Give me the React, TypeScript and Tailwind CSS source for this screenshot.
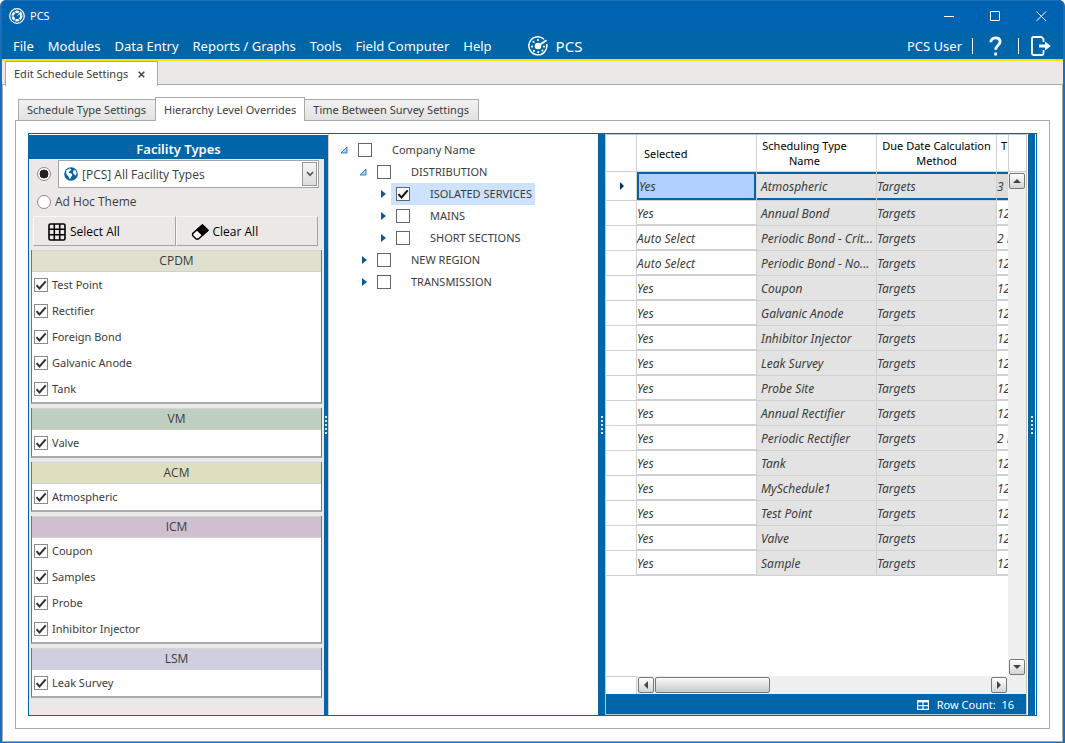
import { useState } from "react";
import type { ReactNode } from "react";

type Group = { name: string; color: string; items: string[] };

const groups: Group[] = [
  {
    name: "CPDM",
    color: "bg-[#dfe0cd]",
    items: ["Test Point", "Rectifier", "Foreign Bond", "Galvanic Anode", "Tank"],
  },
  { name: "VM", color: "bg-[#bfcfbf]", items: ["Valve"] },
  { name: "ACM", color: "bg-[#dfdfbf]", items: ["Atmospheric"] },
  { name: "ICM", color: "bg-[#d0bfcf]", items: ["Coupon", "Samples", "Probe", "Inhibitor Injector"] },
  { name: "LSM", color: "bg-[#cfcfdf]", items: ["Leak Survey"] },
];

type Node = { label: string; indent: string; open?: boolean; selected?: boolean };

const tree: Node[] = [
  { label: "Company Name", indent: "pl-[9px]", open: true },
  { label: "DISTRIBUTION", indent: "pl-[28px]", open: true },
  { label: "ISOLATED SERVICES", indent: "pl-[47px]", selected: true },
  { label: "MAINS", indent: "pl-[47px]" },
  { label: "SHORT SECTIONS", indent: "pl-[47px]" },
  { label: "NEW REGION", indent: "pl-[28px]" },
  { label: "TRANSMISSION", indent: "pl-[28px]" },
];

const rows = [
  ["Yes", "Atmospheric", "3 Y"],
  ["Yes", "Annual Bond", "12"],
  ["Auto Select", "Periodic Bond - Crit...", "2 M"],
  ["Auto Select", "Periodic Bond - No...", "12"],
  ["Yes", "Coupon", "12"],
  ["Yes", "Galvanic Anode", "12"],
  ["Yes", "Inhibitor Injector", "12"],
  ["Yes", "Leak Survey", "12"],
  ["Yes", "Probe Site", "12"],
  ["Yes", "Annual Rectifier", "12"],
  ["Yes", "Periodic Rectifier", "2 M"],
  ["Yes", "Tank", "12"],
  ["Yes", "MySchedule1", "12"],
  ["Yes", "Test Point", "12"],
  ["Yes", "Valve", "12"],
  ["Yes", "Sample", "12"],
];

const menu = ["File", "Modules", "Data Entry", "Reports / Graphs", "Tools", "Field Computer", "Help"];
const tabs = ["Schedule Type Settings", "Hierarchy Level Overrides", "Time Between Survey Settings"];

function AppIcon() {
  return (
    <svg viewBox="0 0 16 16" className="size-4" fill="none" stroke="white">
      <circle cx="8" cy="8" r="7.3" strokeWidth="1.2" />
      <circle cx="8" cy="8" r="4.3" strokeWidth="2.4" strokeDasharray="3.7 .8" />
      <path d="M8.5 7.5l4-3.5" strokeWidth="1" />
    </svg>
  );
}

function Logo() {
  return (
    <svg viewBox="0 0 20 20" className="size-5" fill="none" stroke="white">
      <path d="M16 3.2A9 9 0 1 0 18.7 8" strokeWidth="1.5" />
      <path d="M10 10l8.5-5.8" strokeWidth="1.8" />
      <g fill="white" stroke="none">
        <circle cx="10" cy="10" r="3.3" />
        <circle cx="10" cy="4" r="1.1" />
        <circle cx="5.6" cy="5.8" r="1.1" />
        <circle cx="4" cy="10.6" r="1.1" />
        <circle cx="6" cy="14.8" r="1.1" />
        <circle cx="10.3" cy="16.2" r="1.1" />
        <circle cx="14.4" cy="14.6" r="1.1" />
        <circle cx="16" cy="10.6" r="1.1" />
      </g>
    </svg>
  );
}

function Check({ label, checked = false, dark = false }: { label: string; checked?: boolean; dark?: boolean }) {
  const [on, setOn] = useState(checked);
  return (
    <span className="relative flex size-3.5 shrink-0">
      <input
        type="checkbox"
        aria-label={label}
        checked={on}
        onChange={() => setOn(!on)}
        className={`peer size-3.5 appearance-none border bg-white ${dark ? "border-[#666]" : "border-[#8a8a8a]"}`}
      />
      <svg
        viewBox="0 0 14 14"
        className="pointer-events-none absolute inset-0 hidden size-3.5 peer-checked:block"
        fill="none"
        stroke={dark ? "#111" : "#333"}
        strokeWidth="2"
      >
        <path d="M2.5 7.2l3 3.3L11.7 3.4" />
      </svg>
    </span>
  );
}

function ScrollButton({ label, path }: { label: string; path: string }) {
  return (
    <button
      type="button"
      aria-label={label}
      className="flex size-4 shrink-0 items-center justify-center rounded-xs border border-[#777] bg-linear-to-b from-white to-[#d4d4d4]"
    >
      <svg viewBox="0 0 8 8" className="size-2" fill="#444">
        <path d={path} />
      </svg>
    </button>
  );
}

function Splitter({ className }: { className: string }) {
  return (
    <div className={`flex shrink-0 items-center justify-center bg-[#0065a9] ${className}`}>
      <span className="flex flex-col gap-0.5">
        {[0, 1, 2, 3, 4].map((i) => (
          <span key={i} className="h-0.5 w-0.5 bg-[#dce9f4]" />
        ))}
      </span>
    </div>
  );
}

function ToolButton({ icon, children }: { icon: ReactNode; children: ReactNode }) {
  return (
    <button
      type="button"
      className="flex h-[30px] flex-1 items-center gap-1 border border-t-[#f8f6f6] border-r-[#a5a3a3] border-b-[#a5a3a3] border-l-[#f8f6f6] pt-px pl-3.5 font-['Open_Sans',sans-serif] text-[12px] text-black"
    >
      {icon}
      {children}
    </button>
  );
}

function FacilityPanel() {
  return (
    <section className="mt-px flex w-[299px] shrink-0 flex-col">
      <h2 className="flex h-6 items-center justify-center bg-[#0065a9] pt-1 text-[13px] font-semibold text-white">
        Facility Types
      </h2>
      <div className="flex flex-1">
        <div className="flex-1 bg-[#ece8e8] pb-4">
          <div className="flex h-[29px] items-center pt-px pr-[5px] pl-2">
            <input
              type="radio"
              name="theme"
              aria-label="Facility type theme"
              defaultChecked
              className="mr-[7px] size-3.5 appearance-none rounded-full border border-[#888] bg-white bg-radial checked:from-[#222] checked:from-50% checked:to-white checked:to-55%"
            />
            <div className="relative h-7 flex-1">
              <select
                aria-label="Facility types"
                className="h-7 w-full appearance-none border border-[#a5a5a5] bg-white pt-px pl-[23px] font-['Open_Sans',sans-serif] text-[12px]"
              >
                <option>[PCS] All Facility Types</option>
              </select>
              <svg viewBox="0 0 14 14" className="pointer-events-none absolute top-[7px] left-1.5 size-3.5">
                <circle cx="7" cy="7" r="6.8" fill="#0f62a0" />
                <path d="M2.2 3.4L5.6 1.6l1.8.7-.8 1.5-1.8.9.3 1.2 2.4.7.9 1.4-1.5 2.4L6 12.6 4.6 9.7 2.3 7z" fill="white" />
                <path d="M9.6 3l2 .4 1 2.6-.8 2.4-1.6-.8-1.2-1.9z" fill="white" />
              </svg>
              <span className="pointer-events-none absolute top-0.5 right-0.5 flex h-6 w-[15px] items-center justify-center border border-[#999] bg-linear-to-b from-[#f4f4f4] to-[#ddd]">
                <svg viewBox="0 0 8 6" className="h-1.5 w-2" fill="none" stroke="#555" strokeWidth="1.6">
                  <path d="M1 1l3 3.4L7 1" />
                </svg>
              </span>
            </div>
          </div>
          <label className="flex h-7 items-center gap-1 pl-2 font-['Open_Sans',sans-serif] text-[12px]">
            <input
              type="radio"
              name="theme"
              className="size-3.5 appearance-none rounded-full border border-[#888] bg-white bg-radial checked:from-[#222] checked:from-50% checked:to-white checked:to-55%"
            />
            Ad Hoc Theme
          </label>
          <div className="flex pr-1.5 pl-1">
            <ToolButton
              icon={
                <svg viewBox="0 0 18 18" className="size-[18px]" fill="none" stroke="black" strokeWidth="1.6">
                  <rect x="1" y="1" width="16" height="16" rx="1.5" />
                  <path d="M6.3 1v16M11.7 1v16M1 6.3h16M1 11.7h16" />
                </svg>
              }
            >
              Select All
            </ToolButton>
            <ToolButton
              icon={
                <svg viewBox="0 0 18 18" className="size-[18px]" stroke="black" strokeWidth="1.4" strokeLinejoin="round">
                  <path d="M11.4 2L17 7.2 7.4 16H5.2L1.6 12.4v-1.8z" fill="white" />
                  <path d="M11.4 2L17 7.2l-5.4 5L6 6.8z" fill="black" />
                </svg>
              }
            >
              Clear All
            </ToolButton>
          </div>
          <div className="flex flex-col gap-1 pt-1 pr-0.5 pl-0.5">
            {groups.map((g) => (
              <fieldset key={g.name} className="min-w-0 border-x border-b-2 border-x-[#777] border-b-[#aaa] bg-white">
                <div
                  className={`flex h-[22px] items-center justify-center border-y border-t-[#d4d4d0] border-b-[#d0d0d0] font-['Open_Sans',sans-serif] text-[12px] ${g.color}`}
                >
                  {g.name}
                </div>
                {g.items.map((item) => (
                  <label key={item} className="flex h-[26px] items-center gap-1 pl-0.5">
                    <Check label={item} checked />
                    {item}
                  </label>
                ))}
              </fieldset>
            ))}
          </div>
        </div>
        <Splitter className="w-1 pb-6" />
      </div>
    </section>
  );
}

function TreePanel() {
  return (
    <section className="w-[270px] shrink-0 border-l border-[#ccc] bg-white pt-[5px]">
      <ul>
        {tree.map((n) => (
          <li key={n.label} className={`-ml-px flex h-[22px] items-center ${n.indent}`}>
            <button type="button" aria-label={`Toggle ${n.label}`} className="flex w-4 pl-[3px]">
              <svg viewBox="0 0 8 8" className="size-2">
                {n.open ? (
                  <path d="M7 1v6H1z" fill="#a8d4f0" stroke="#1b6aa8" strokeWidth=".8" />
                ) : (
                  <path d="M3 0l5 4-5 4z" fill="#0d5a98" />
                )}
              </svg>
            </button>
            <label className={`flex h-full items-center gap-5 pr-[3px] pl-[5px] ${n.selected ? "bg-[#cce2ff]" : ""}`}>
              <Check label={n.label} checked={n.selected} dark />
              {n.label}
            </label>
          </li>
        ))}
      </ul>
    </section>
  );
}

function Grid() {
  const head = "h-[37px] border-r border-b border-[#d0d0d0] p-0 text-center font-normal leading-[15px] text-black";
  const cell = "border-r border-b border-[#d0d0d0] p-0 whitespace-nowrap";
  return (
    <section className="flex min-w-0 flex-1 flex-col border-t border-r border-b border-[#c8c8c8] bg-white">
      <div className="flex flex-1">
        <div className="w-0 flex-1 overflow-hidden">
          <table className="w-[511px] table-fixed border-separate border-spacing-0">
            <thead>
              <tr>
                <th className={`w-[31px] ${head}`} />
                <th className={`w-[120px] ${head}`}>
                  <div className="pl-[7px] text-left">Selected</div>
                </th>
                <th className={`w-[120px] ${head}`}>
                  <div className="pr-6">
                    Scheduling Type
                    <br />
                    Name
                  </div>
                </th>
                <th className={`w-[120px] ${head}`}>
                  Due Date Calculation
                  <br />
                  Method
                </th>
                <th className={`w-[120px] ${head}`}>
                  <div className="pb-[15px] pl-1 text-left">T</div>
                </th>
              </tr>
            </thead>
            <tbody className="text-[12px] italic">
              {rows.map(([selected, name, period], i) =>
                i === 0 ? (
                  <tr key={name} className="h-[29px]">
                    <td className={cell}>
                      <svg viewBox="0 0 8 8" className="ml-[11px] size-2" fill="#0b2e63">
                        <path d="M3 0l4 4-4 4z" />
                      </svg>
                    </td>
                    <td className={cell}>
                      <div className="flex h-7 items-center border-2 border-[#0065a9] bg-[#b0d1ff] pt-0.5">{selected}</div>
                    </td>
                    <td className={cell}>
                      <div className="flex h-7 items-center border-y-2 border-[#0065a9] bg-[#e3e3e3] pt-0.5 pl-1">{name}</div>
                    </td>
                    <td className={cell}>
                      <div className="flex h-7 items-center border-y-2 border-[#0065a9] bg-[#e3e3e3] pt-0.5">Targets</div>
                    </td>
                    <td className={cell}>
                      <div className="flex h-7 items-center border-y-2 border-[#0065a9] bg-[#dcdcdc] pt-0.5">{period}</div>
                    </td>
                  </tr>
                ) : (
                  <tr key={name} className="h-[25px]">
                    <td className={cell} />
                    <td className={cell}>
                      <div className="flex h-6 items-center border-b border-[#d0d0d0] pt-0.5">{selected}</div>
                    </td>
                    <td className={`bg-[#e3e3e3] ${cell}`}>
                      <div className="pt-px pl-1">{name}</div>
                    </td>
                    <td className={`bg-[#e3e3e3] ${cell}`}>
                      <div className="pt-px">Targets</div>
                    </td>
                    <td className={cell}>
                      <div className="flex h-6 items-center border-b border-[#d0d0d0] pt-0.5">{period}</div>
                    </td>
                  </tr>
                ),
              )}
            </tbody>
          </table>
        </div>
        <div className="flex w-[18px] shrink-0 flex-col">
          <div className="h-[37px] border-b border-l border-[#d0d0d0]" />
          <div className="flex flex-1 flex-col items-center justify-between bg-[#efefef] py-px">
            <ScrollButton label="Scroll up" path="M0 6l4-4 4 4z" />
            <ScrollButton label="Scroll down" path="M0 2l4 4 4-4z" />
          </div>
        </div>
      </div>
      <div className="flex h-[18px]">
        <div className="w-[31px] border-t border-r border-[#d0d0d0]" />
        <div className="flex flex-1 items-center gap-px bg-[#efefef] px-px">
          <ScrollButton label="Scroll left" path="M6 0L2 4l4 4z" />
          <div className="h-4 w-[115px] rounded-xs border border-[#777] bg-linear-to-b from-[#fafafa] to-[#c9c9c9]" />
          <span className="flex-1" />
          <ScrollButton label="Scroll right" path="M2 0l4 4-4 4z" />
        </div>
        <div className="w-[18px] bg-[#efefef]" />
      </div>
      <footer className="flex h-5 items-center justify-end gap-2 bg-[#0065a9] pt-px pr-3 whitespace-pre text-white">
        <svg viewBox="0 0 12 10" className="h-2.5 w-3" fill="none" stroke="white">
          <path d="M.6 1h10.8v8.4H.6zM6 1v8.4M.6 5.6h10.8" strokeWidth="1.2" />
          <path d="M0 1.2h12" strokeWidth="2.4" />
        </svg>
        Row Count:  16
      </footer>
    </section>
  );
}

export default function App() {
  const [tab, setTab] = useState(tabs[1]);

  return (
    <div className="flex min-h-screen flex-col overflow-hidden rounded-t-md border-x-2 border-b border-[#1a6fb8] bg-[#0063b1] font-['Noto_Sans',sans-serif] text-[11px] leading-4 text-[#3c3c3c]">
      <header>
        <div className="flex h-[31px] items-center border-t border-[#1a6fb8] bg-[#0063b1] pr-4 pl-[7px] text-white">
          <AppIcon />
          <span className="ml-[5px] flex-1">PCS</span>
          <div className="flex items-center gap-[35px]">
            <button type="button" aria-label="Minimize">
              <svg viewBox="0 0 11 11" className="size-[11px]" stroke="white">
                <path d="M0 5.5h10" />
              </svg>
            </button>
            <button type="button" aria-label="Maximize">
              <svg viewBox="0 0 11 11" className="size-[11px]" fill="none" stroke="white">
                <path d="M.5.5h9v9h-9z" />
              </svg>
            </button>
            <button type="button" aria-label="Close">
              <svg viewBox="0 0 11 11" className="size-[11px]" stroke="white">
                <path d="M.5.5l9.500 9.500M10 .5L.5 10" />
              </svg>
            </button>
          </div>
        </div>
        <div className="flex h-[30px] items-center border-b-2 border-[#fee000] bg-[#0065a9] pt-px pr-3 pl-[11px] text-[13px] text-white">
          <nav className="flex gap-3.5">
            {menu.map((item) => (
              <button key={item} type="button" className="whitespace-nowrap">
                {item}
              </button>
            ))}
          </nav>
          <div className="ml-9 flex flex-1 items-center gap-2 text-[15px]">
            <Logo />
            PCS
          </div>
          <span className="mr-2.5">PCS User</span>
          <span className="h-4 w-px bg-white" />
          <button type="button" aria-label="Help" className="mx-4">
            <svg viewBox="0 0 13 20" className="h-5 w-[13px]" fill="none" stroke="white" strokeWidth="2.8">
              <path d="M1.8 6.2C1.8 3.4 3.8 1.8 6.5 1.8s4.6 1.5 4.6 4c0 3.4-4.5 3.6-4.5 8" />
              <path d="M6.6 16.6v2.9" />
            </svg>
          </button>
          <span className="h-4 w-px bg-white" />
          <button type="button" aria-label="Log out" className="ml-3">
            <svg viewBox="0 0 20 20" className="size-5" fill="none" stroke="white" strokeWidth="1.8">
              <path d="M12.5 6V3.2L10.5 1H2.5Q1 1 1 2.5v15Q1 19 2.5 19H11q1.5 0 1.5-1.5V14" />
              <path d="M8 10h7" strokeWidth="3" />
              <path d="M14 5.5l5.8 4.5-5.8 4.5z" fill="white" stroke="none" />
            </svg>
          </button>
        </div>
      </header>

      <div className="flex h-6 bg-[#ece8e8] pl-[3px]">
        <div className="z-10 -mb-px flex items-center border-x border-t border-[#a9a9a9] bg-white px-2">
          Edit Schedule Settings
          <button type="button" aria-label="Close tab" className="mr-1 ml-2.5">
            <svg viewBox="0 0 7 7" className="size-[7px]" stroke="#444" strokeWidth="1.5">
              <path d="M.7.7l5.6 5.6M6.3.7L.7 6.3" />
            </svg>
          </button>
        </div>
      </div>

      <main className="-mt-px flex flex-1 flex-col border border-[#a9a9a9] bg-white p-3">
        <div className="flex h-[23px] items-end pl-[3px]">
          {tabs.map((t) => (
            <button
              key={t}
              type="button"
              onClick={() => setTab(t)}
              className={
                t === tab
                  ? "z-10 -mb-px -ml-px h-6 border-x border-t border-[#a9a9a9] bg-white px-2"
                  : "h-[21px] border border-b-0 border-[#a9a9a9] bg-linear-to-b from-[#f2f2f2] to-[#e2e2e2] px-2 pr-[9px] last:-ml-px"
              }
            >
              {t}
            </button>
          ))}
        </div>
        <div className="flex flex-1 border border-[#a9a9a9] p-3">
          <div className="flex flex-1 border border-[#0065a9]">
            <FacilityPanel />
            <TreePanel />
            <Splitter className="w-2 border-r border-[#c8c8c8]" />
            <Grid />
            <Splitter className="mx-px w-[7px]" />
          </div>
        </div>
      </main>
    </div>
  );
}
